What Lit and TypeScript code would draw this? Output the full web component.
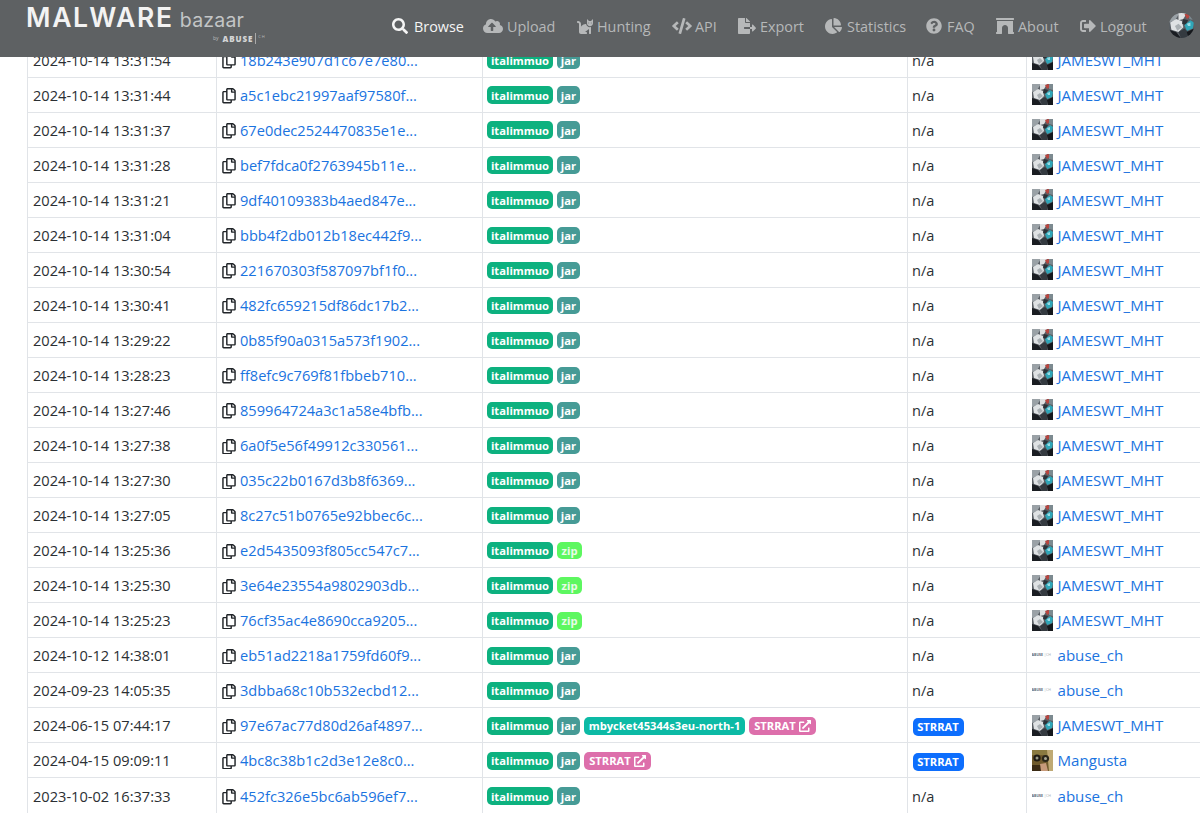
import { LitElement, html, css, svg } from "lit";
import { customElement } from "lit/decorators.js";

type Row = [string, string, string, string?];
const rows: Row[] = [
  ["2024-10-14 13:31:54","18b243e907d1c67e7e80...","j"],
  ["2024-10-14 13:31:44","a5c1ebc21997aaf97580f...","j"],
  ["2024-10-14 13:31:37","67e0dec2524470835e1e...","j"],
  ["2024-10-14 13:31:28","bef7fdca0f2763945b11e...","j"],
  ["2024-10-14 13:31:21","9df40109383b4aed847e...","j"],
  ["2024-10-14 13:31:04","bbb4f2db012b18ec442f9...","j"],
  ["2024-10-14 13:30:54","221670303f587097bf1f0...","j"],
  ["2024-10-14 13:30:41","482fc659215df86dc17b2...","j"],
  ["2024-10-14 13:29:22","0b85f90a0315a573f1902...","j"],
  ["2024-10-14 13:28:23","ff8efc9c769f81fbbeb710...","j"],
  ["2024-10-14 13:27:46","859964724a3c1a58e4bfb...","j"],
  ["2024-10-14 13:27:38","6a0f5e56f49912c330561...","j"],
  ["2024-10-14 13:27:30","035c22b0167d3b8f6369...","j"],
  ["2024-10-14 13:27:05","8c27c51b0765e92bbec6c...","j"],
  ["2024-10-14 13:25:36","e2d5435093f805cc547c7...","z"],
  ["2024-10-14 13:25:30","3e64e23554a9802903db...","z"],
  ["2024-10-14 13:25:23","76cf35ac4e8690cca9205...","z"],
  ["2024-10-12 14:38:01","eb51ad2218a1759fd60f9...","j","a"],
  ["2024-09-23 14:05:35","3dbba68c10b532ecbd12...","j","a"],
  ["2024-06-15 07:44:17","97e67ac77d80d26af4897...","m"],
  ["2024-04-15 09:09:11","4bc8c38b1c2d3e12e8c0...","s","g"],
  ["2023-10-02 16:37:33","452fc326e5bc6ab596ef7...","j","a"],
];

const avatarJ = svg`<svg class="av" viewBox="0 0 21 21"><rect width="21" height="21" fill="#5a5f65"/><path d="M0 0h9L5 6 0 8z" fill="#9aa1a6"/><path d="M8 0h7l-3 5-4 1z" fill="#dfe1e2"/><path d="M13 1l4-1 1 3-3 2z" fill="#b8453f"/><path d="M17 0h4v6l-4-1z" fill="#7c8a90"/><path d="M1 8l5-3 5 2 1 5-4 4-6-2z" fill="#dfe2e4"/><path d="M5 11l3-2 3 3-4 3z" fill="#aab0b4"/><path d="M12 5l4 1-2 4-3-1z" fill="#2d3238"/><path d="M13 10l5-4 3 2-1 5-5 2z" fill="#2fa6b8"/><path d="M15 9l3-1v3h-2z" fill="#9adbe4"/><path d="M0 14l6 2 4 5H0z" fill="#1a1d22"/><path d="M8 16l5-3 3 3-1 5h-5z" fill="#343a40"/><path d="M15 16l6-3v8h-5z" fill="#15181c"/></svg>`;
const avatarG = svg`<svg class="av" viewBox="0 0 21 21"><rect width="21" height="21" fill="#6f5a2c"/><rect width="21" height="5" fill="#8a7a40"/><path d="M15 0h6v21h-4z" fill="#bfa974"/><path d="M0 15h9l2 6H0z" fill="#3a2a14"/><path d="M8 14l6-1 2 8H9z" fill="#c79a7a"/><circle cx="5" cy="8" r="3.600" fill="#1e1a12"/><circle cx="13.500" cy="8.500" r="3.600" fill="#2a261a"/><circle cx="5" cy="8" r="1.500" fill="#9a9a88"/><circle cx="13.500" cy="8.500" r="1.500" fill="#a8a894"/></svg>`;

const P = {
  search: "M505 442.700L405.300 343c-4.500-4.500-10.600-7-17-7H372c27.600-35.300 44-79.700 44-128C416 93.100 322.900 0 208 0S0 93.100 0 208s93.100 208 208 208c48.300 0 92.700-16.400 128-44v16.300c0 6.400 2.500 12.500 7 17l99.700 99.700c9.400 9.400 24.600 9.400 33.900 0l28.300-28.300c9.400-9.400 9.400-24.600.1-34zM208 336c-70.700 0-128-57.200-128-128 0-70.700 57.200-128 128-128 70.700 0 128 57.200 128 128 0 70.700-57.200 128-128 128z",
  pie: "M527.790 288H290.500l158.030 158.030c6.040 6.040 15.980 6.530 22.190.68 38.700-36.460 65.320-85.610 73.130-140.860 1.340-9.460-6.510-17.850-16.060-17.850zm-15.830-64.800C503.720 103.740 408.260 8.280 288.800.04 279.680-.59 272 7.100 272 16.240V240h223.770c9.140 0 16.820-7.680 16.190-16.800zM224 288V50.710c0-9.550-8.390-17.400-17.840-16.060C86.990 51.490-4.100 155.600.14 280.370 4.500 408.510 114.830 513.590 243.030 511.980c50.400-.63 96.970-16.870 135.260-44.030 7.900-5.600 8.420-17.230 1.570-24.080L224 288z",
  q: "M504 256c0 137-111 248-248 248S8 393 8 256 119 8 256 8s248 111 248 248zM262.700 90c-54.500 0-89.300 23-116.500 63.800-3.500 5.300-2.400 12.400 2.700 16.300l34.700 26.300c5.200 3.900 12.600 3 16.700-2.100 17.900-22.700 30.100-35.800 57.300-35.800 20.400 0 45.700 13.100 45.700 32.900 0 15-12.400 22.700-32.500 34C247.100 238.500 216 254.900 216 296v4c0 6.600 5.400 12 12 12h56c6.600 0 12-5.400 12-12v-1.300c0-28.500 83.200-29.700 83.200-106.700 0-58-60.200-102-116.500-102zM256 338c-25.400 0-46 20.600-46 46 0 25.400 20.600 46 46 46s46-20.600 46-46c0-25.400-20.600-46-46-46z",
  out: "M497 273L329 441c-15 15-41 4.500-41-17v-96H152c-13.300 0-24-10.700-24-24v-96c0-13.300 10.700-24 24-24h136V88c0-21.400 25.900-32 41-17l168 168c9.300 9.400 9.300 24.600 0 34zM192 436v-40c0-6.600-5.400-12-12-12H96c-17.700 0-32-14.300-32-32V160c0-17.700 14.300-32 32-32h84c6.600 0 12-5.400 12-12V76c0-6.600-5.400-12-12-12H96c-53 0-96 43-96 96v192c0 53 43 96 96 96h84c6.600 0 12-5.400 12-12z",
  code: "M278.900 511.500l-61-17.700c-6.400-1.800-10-8.500-8.200-14.900L346.200 8.700c1.800-6.400 8.500-10 14.900-8.200l61 17.700c6.400 1.800 10 8.500 8.200 14.900L293.800 503.300c-1.900 6.400-8.500 10.100-14.900 8.200zm-114-112.200l43.500-46.400c4.600-4.900 4.300-12.700-.8-17.200L117 256l90.600-79.700c5.100-4.500 5.500-12.300.8-17.200l-43.500-46.400c-4.500-4.800-12.100-5.100-17-.5L3.800 247.200c-5.100 4.700-5.100 12.800 0 17.500l144.100 135.100c4.900 4.600 12.500 4.400 17-.5zm327.200.6l144.100-135.100c5.100-4.700 5.100-12.800 0-17.500L492.100 112.100c-4.800-4.500-12.400-4.300-17 .5L431.600 159c-4.600 4.900-4.300 12.700.8 17.200L523 256l-90.600 79.700c-5.100 4.500-5.500 12.300-.8 17.200l43.500 46.400c4.500 4.900 12.100 5.100 17 .6z",
  cloud: "M537.600 226.600c4.100-10.700 6.400-22.400 6.400-34.600 0-53-43-96-96-96-19.700 0-38.100 6-53.300 16.200C367 64.200 315.300 32 256 32c-88.400 0-160 71.600-160 160 0 2.700.1 5.400.2 8.100C40.200 219.800 0 273.200 0 336c0 79.500 64.500 144 144 144h368c70.700 0 128-57.300 128-128 0-61.900-44-113.600-102.400-125.400zM393.400 288H328v112c0 8.800-7.200 16-16 16h-48c-8.800 0-16-7.200-16-16V288h-65.400c-14.300 0-21.400-17.200-11.300-27.300l105.400-105.400c6.200-6.200 16.400-6.200 22.600 0l105.400 105.400c10.100 10.100 2.900 27.300-11.300 27.300z",
  export: "M384 121.900c0-6.300-2.500-12.400-7-16.900L279.100 7c-4.500-4.500-10.600-7-17-7H256v128h128zM571 308l-95.700-96.400c-10.100-10.100-27.400-3-27.400 11.300V288h-64v64h64v65.200c0 14.300 17.300 21.400 27.400 11.300L571 332c6.600-6.600 6.600-17.400 0-24zm-379 28v-32c0-8.800 7.200-16 16-16h176V160H248c-13.200 0-24-10.800-24-24V0H24C10.700 0 0 10.700 0 24v464c0 13.300 10.700 24 24 24h336c13.300 0 24-10.700 24-24V352H208c-8.800 0-16-7.200-16-16z",
  extlink: "M432 320h-32a16 16 0 0 0-16 16v112H64V128h144a16 16 0 0 0 16-16V80a16 16 0 0 0-16-16H48a48 48 0 0 0-48 48v352a48 48 0 0 0 48 48h352a48 48 0 0 0 48-48V336a16 16 0 0 0-16-16zM488 0H360c-21.400 0-32 25.900-17 41l35.700 35.700L135 320.400a24 24 0 0 0 0 34l22.600 22.600a24 24 0 0 0 34 0l243.700-243.600L471 169c15 15 41 4.500 41-17V24a24 24 0 0 0-24-24z",
  copy: "M433.900 65.900l-51.900-51.900A48 48 0 0 0 348.100 0H176c-26.500 0-48 21.500-48 48v48H48c-26.500 0-48 21.500-48 48v320c0 26.500 21.500 48 48 48h224c26.500 0 48-21.500 48-48v-48h80c26.500 0 48-21.500 48-48V99.900a48 48 0 0 0-14.100-34zM266 464H54a6 6 0 0 1-6-6V150a6 6 0 0 1 6-6h74v224c0 26.500 21.500 48 48 48h96v42a6 6 0 0 1-6 6zm128-96H182a6 6 0 0 1-6-6V54a6 6 0 0 1 6-6h106v88c0 13.300 10.700 24 24 24h88v202a6 6 0 0 1-6 6zm6-256h-64V48h9.600c1.600 0 3.100.6 4.200 1.800l48.400 48.400a6 6 0 0 1 1.800 4.200V112z",
  cat: "M290.590 192c-20.180 0-106.820 1.980-162.590 85.950V192c0-52.940-43.060-96-96-96-17.670 0-32 14.330-32 32s14.330 32 32 32c17.640 0 32 14.360 32 32v256c0 35.300 28.700 64 64 64h176c8.840 0 16-7.160 16-16v-16c0-17.670-14.330-32-32-32h-32l128-96v144c0 8.840 7.160 16 16 16h32c8.840 0 16-7.160 16-16V289.860c-10.290 2.670-20.890 4.540-32 4.540-61.810 0-113.520-44.050-125.410-102.400zM448 96h-64l-64-64v134.400c0 53.020 42.980 96 96 96s96-42.980 96-96V32l-64 64zm-72 80c-8.840 0-16-7.160-16-16s7.160-16 16-16 16 7.160 16 16-7.160 16-16 16zm80 0c-8.840 0-16-7.160-16-16s7.160-16 16-16 16 7.160 16 16-7.160 16-16 16z",
  arch: "M560 448h-16V96H32v352H16.020c-8.840 0-16 7.160-16 16v32c0 8.840 7.160 16 16 16H176c8.840 0 16-7.160 16-16V320c0-53.020 42.980-96 96-96s96 42.980 96 96l.02 160v16c0 8.840 7.160 16 16 16H560c8.840 0 16-7.160 16-16v-32c0-8.840-7.160-16-16-16zm0-448H16C7.160 0 0 7.160 0 16v32c0 8.840 7.160 16 16 16h544c8.840 0 16-7.160 16-16V16c0-8.840-7.160-16-16-16z",
};
const icon = (d: string, vb: string, cls = "ni") => svg`<svg class=${cls} viewBox=${vb} aria-hidden="true"><path d=${d} fill="currentColor"/></svg>`;

const navItems = [
  { t: "Browse", d: P.search, vb: "0 0 512 512", on: true, w: 91, g: 6 },
  { t: "Upload", d: P.cloud, vb: "0 0 640 512", w: 94, g: 4 },
  { t: "Hunting", d: P.cat, vb: "0 0 512 512", w: 95, g: 4 },
  { t: "API", d: P.code, vb: "0 0 640 512", w: 66, g: 3 },
  { t: "Export", d: P.export, vb: "0 0 576 512", w: 87, g: 4 },
  { t: "Statistics", d: P.pie, vb: "0 0 544 512", w: 101, g: 5 },
  { t: "FAQ", d: P.q, vb: "0 0 512 512", w: 70, g: 5 },
  { t: "About", d: P.arch, vb: "0 0 576 512", w: 84, g: 4 },
  { t: "Logout", d: P.out, vb: "0 0 512 512", w: 89, g: 4 },
];

@customElement("app-root")
export class AppRoot extends LitElement {
  static styles = css`
    :host { display: block; width: 1200px; height: 813px; overflow: hidden; background: #fff; font-family: "Open Sans", "Noto Sans", sans-serif; color: #212529; }
    .nav { position: relative; height: 57px; z-index: 2; background: #5e6163; display: flex; align-items: center; }
    .brand { margin-left: 26px; width: 366px; height: 57px; display: flex; flex-direction: column; flex: none; }
    .brand-top { display: flex; align-items: baseline; height: 34px; padding-top: 2px; box-sizing: border-box; }
    .mw { font: 600 26.500px/31px Inter, sans-serif; letter-spacing: 1.700px; color: #f3f3f3; }
    .bz { font: 400 19.500px/31px Inter, "Noto Sans", sans-serif; color: #c3c5c6; margin-left: 6px; letter-spacing: .2px; }
    .by { display: flex; align-items: center; margin: -1px 0 0 187px; font: 700 8px/9px "Noto Sans", sans-serif; color: #d4d5d6; letter-spacing: .9px; white-space: nowrap; }
    .by i { font: 400 5px/9px "Noto Sans", sans-serif; margin-right: 4px; color: #b5b7b8; letter-spacing: 0; }
    .by b { border-right: 1px solid #aaa; padding-right: 2px; margin-right: 2px; height: 11px; line-height: 11px; }
    .by u { text-decoration: none; font: 400 4px/9px "Noto Sans", sans-serif; margin-top: -4px; color: #b5b7b8; }
    .links { display: flex; align-items: center; height: 53px; margin-top: -5px; flex: none; }
    .link { display: flex; align-items: center; font-size: 14.400px; color: #b6b8b9; white-space: nowrap; flex: none; }
    .link.on { color: #f5f5f5; }
    .ni { height: 16px; flex: none; }
    .me { margin: -7px 6px 0 auto; width: 25px; height: 25px; border-radius: 50%; overflow: hidden; flex: none; }
    .me .av { width: 25px; height: 25px; margin: 0; }
    .wrap { margin-top: -15.500px; padding-left: 27px; }
    table { width: 1200px; table-layout: fixed; border-collapse: collapse; font-size: 14.600px; }
    col.c1 { width: 189px; } col.c2 { width: 266px; } col.c3 { width: 425px; } col.c4 { width: 119px; } col.c5 { width: 201px; }
    tr { height: 35.050px; }
    td { border: 1px solid #e1e4e8; padding: 0 0 0 4px; white-space: nowrap; overflow: hidden; line-height: 24px; vertical-align: middle; }
    tr:first-child td { border-top: 0; }
    .date { color: #2b2f33; padding-left: 5px; }
    .hash { color: #1a73e0; padding-left: 4.500px; }
    .copy { height: 15.500px; width: 14px; vertical-align: -3px; margin-right: 4.500px; color: #212529; }
    .user { color: #1a73e0; display: flex; align-items: center; font-size: 15.100px; padding-left: .5px; }
    .av { width: 21px; height: 21px; display: block; flex: none; margin-right: 5px; }
    .abuse { width: 21px; height: 21px; flex: none; margin-right: 5px; display: flex; align-items: center; overflow: hidden; font: 700 3.600px/6px "Noto Sans", sans-serif; color: #5a6b78; }
    .abuse i { font-style: normal; color: #a9b2b8; font-weight: 400; margin-left: 1px; }
    .tags { display: flex; gap: 4px; padding-top: 1px; }
    .tag { display: inline-flex; align-items: center; height: 17.500px; padding: 0 5px; border-radius: 5px; color: #fff; font-size: 11.200px; font-weight: 700; line-height: 17px; box-sizing: border-box; }
    .it { background: #0db17f; width: 66px; justify-content: center; padding: 0; }
    .jar { background: #469b96; width: 23px; justify-content: center; padding: 0; }
    .zip { background: #5df760; width: 25px; justify-content: center; padding: 0; color: #e9fbe9; }
    .mb { background: #0cbaa5; width: 161px; justify-content: center; padding: 0; }
    .st { background: #dd6fab; width: 67px; justify-content: center; padding: 0; }
    .st svg { width: 12px; height: 12px; margin-left: 3px; }
    .sig { background: #0d6efd; width: 51px; justify-content: center; padding: 0; margin-left: .5px; }
    .na { color: #2b2f33; }
  `;

  private tags(k: string) {
    const st = html`<span class="tag st">STRRAT${icon(P.extlink, "0 0 512 512", "x")}</span>`;
    return html`<div class="tags">
      <span class="tag it">italimmuo</span>
      ${k === "z" ? html`<span class="tag zip">zip</span>` : html`<span class="tag jar">jar</span>`}
      ${k === "m" ? html`<span class="tag mb">mbycket45344s3eu-north-1</span>${st}` : ""}
      ${k === "s" ? st : ""}
    </div>`;
  }

  render() {
    return html`
      <div class="nav">
        <div class="brand">
          <div class="brand-top"><span class="mw">MALWARE</span><span class="bz">bazaar</span></div>
          <div class="by"><i>by</i><b>ABUSE</b><u>CH</u></div>
        </div>
        <div class="links">
          ${navItems.map((n) => html`<div class="link ${n.on ? "on" : ""}" style="width:${n.w}px;gap:${n.g}px">${icon(n.d, n.vb)}${n.t}</div>`)}
        </div>
        <div class="me">${avatarJ}</div>
      </div>
      <div class="wrap">
        <table>
          <colgroup><col class="c1"/><col class="c2"/><col class="c3"/><col class="c4"/><col class="c5"/></colgroup>
          ${rows.map((r) => html`<tr>
            <td class="date">${r[0]}</td>
            <td class="hash">${icon(P.copy, "0 0 448 512", "copy")}${r[1]}</td>
            <td>${this.tags(r[2])}</td>
            <td>${r[2] === "m" || r[2] === "s" ? html`<span class="tag sig">STRRAT</span>` : html`<span class="na">n/a</span>`}</td>
            <td><div class="user">${r[3] === "a" ? html`<span class="abuse">ABUSE<i>|CH</i></span>` : r[3] === "g" ? avatarG : avatarJ}${r[3] === "a" ? "abuse_ch" : r[3] === "g" ? "Mangusta" : "JAMESWT_MHT"}</div></td>
          </tr>`)}
        </table>
      </div>
    `;
  }
}
